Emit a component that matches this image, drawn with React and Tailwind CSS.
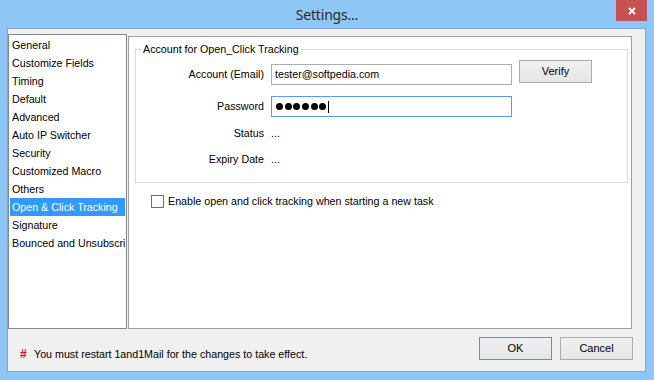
import { useState } from 'react';

const sections = [
  'General',
  'Customize Fields',
  'Timing',
  'Default',
  'Advanced',
  'Auto IP Switcher',
  'Security',
  'Customized Macro',
  'Others',
  'Open & Click Tracking',
  'Signature',
  'Bounced and Unsubscribe',
];

function Button({ label, primary }) {
  return (
    <button
      className={`w-[73px] h-[23px] flex items-center justify-center border bg-gradient-to-b from-[#f0f0f0] to-[#e5e5e5] text-[11px] text-black ${
        primary ? 'border-[#3c9ce8]' : 'border-[#acacac]'
      }`}
    >
      {label}
    </button>
  );
}

function FieldRow({ label, children, className }) {
  return (
    <div className={`flex items-center ${className}`}>
      <div className="w-[129px] pr-px text-right whitespace-nowrap">{label}</div>
      <div className="ml-[6px]">{children}</div>
    </div>
  );
}

export default function App() {
  const [selected, setSelected] = useState(9);
  const [tracking, setTracking] = useState(false);

  return (
    <div className="w-[654px] h-[380px] bg-[#8ec6f6] flex flex-col text-[10.7px] text-black font-['Liberation_Sans',Arial,sans-serif] overflow-hidden">
      {/* Title bar */}
      <div className="relative h-[28px] flex items-center justify-center">
        <span className="text-[14px] text-[#2b2b2b] font-['Noto_Sans',sans-serif] tracking-[-0.2px] mt-[1px]">
          Settings...
        </span>
        <div className="absolute right-[7px] top-0 w-[31px] h-[21px] bg-[#c75050] flex items-center justify-center">
          <svg width="8" height="8" viewBox="0 0 8 8">
            <path d="M1 1L7 7M7 1L1 7" stroke="white" strokeWidth="1.8" />
          </svg>
        </div>
      </div>

      {/* Client area */}
      <div className="ml-[7px] mr-[8px] h-[344px] border border-[#7ea9d4] bg-[#f0f0f0] flex flex-col">
        <div className="flex items-start">
          {/* Section list */}
          <div className="mt-[5px] w-[119px] h-[295px] border border-[#828790] bg-white p-px overflow-hidden">
            {sections.map((name, i) => (
              <div
                key={name}
                onClick={() => setSelected(i)}
                className={`h-[18px] leading-[18px] pl-[2px] whitespace-nowrap overflow-hidden ${
                  i === selected ? 'bg-[#3399ff] text-white' : ''
                }`}
              >
                {name}
              </div>
            ))}
          </div>

          {/* Settings panel */}
          <div className="mt-[7px] ml-px w-[504px] h-[293px] border border-[#a0a0a0] bg-white flex flex-col">
            <div className="relative mt-[12px] ml-[6px] w-[493px] h-[134px] border border-[#dcdcdc]">
              <span className="absolute left-[5px] top-[-8px] bg-white px-[2px] leading-[14px]">
                Account for Open_Click Tracking
              </span>

              <div className="mt-[10px] flex items-start">
                <FieldRow label="Account (Email)" className="mt-[4px]">
                  <div className="w-[241px] h-[21px] border border-[#abadb3] flex items-center pl-[3px]">
                    tester@softpedia.com
                  </div>
                </FieldRow>
                <div className="ml-[7px]">
                  <Button label="Verify" />
                </div>
              </div>

              <FieldRow label="Password" className="mt-[11px]">
                <div className="w-[241px] h-[21px] border border-[#569de5] flex items-center pl-[4px] gap-[1.7px]">
                  {[0, 1, 2, 3, 4, 5].map((d) => (
                    <span key={d} className="w-[7px] h-[7px] rounded-full bg-black" />
                  ))}
                  <span className="w-px h-[12px] bg-black" />
                </div>
              </FieldRow>

              <FieldRow label="Status" className="mt-[9px] h-[14px]">
                ...
              </FieldRow>

              <FieldRow label="Expiry Date" className="mt-[12px] h-[14px]">
                ...
              </FieldRow>
            </div>

            <label className="mt-[10px] ml-[22px] flex items-center gap-[4px]">
              <span
                onClick={() => setTracking(!tracking)}
                className="w-[13px] h-[13px] border border-[#707070] bg-white flex items-center justify-center"
              >
                {tracking && (
                  <svg width="9" height="9" viewBox="0 0 9 9">
                    <path d="M1 4.5L3.5 7L8 1.5" stroke="black" strokeWidth="1.5" fill="none" />
                  </svg>
                )}
              </span>
              <span>Enable open and click tracking when starting a new task</span>
            </label>
          </div>
        </div>

        {/* Bottom bar */}
        <div className="flex justify-between items-start">
          <div className="mt-[16px] ml-[12px] flex items-center">
            <span className="text-[#ff0000] font-bold text-[12px] w-[14px]">#</span>
            <span>You must restart 1and1Mail for the changes to take effect.</span>
          </div>
          <div className="mt-[8px] mr-[12px] flex gap-[8px]">
            <Button label="OK" primary />
            <Button label="Cancel" />
          </div>
        </div>
      </div>
    </div>
  );
}
